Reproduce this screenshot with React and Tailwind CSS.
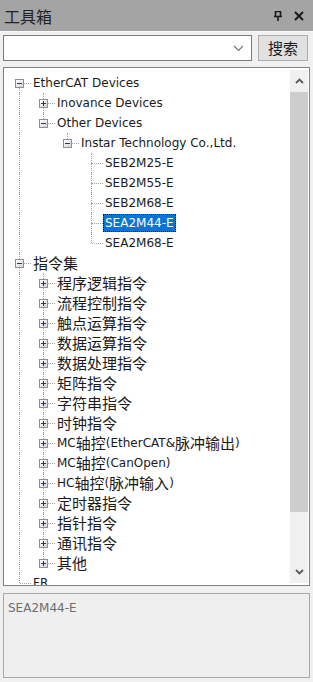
import React from "react";

// toolbox tree data
const tree = [
  {
    label: "EtherCAT Devices",
    open: true,
    children: [
      { label: "Inovance Devices", children: [{ label: "x" }] },
      {
        label: "Other Devices",
        open: true,
        children: [
          {
            label: "Instar Technology Co.,Ltd.",
            open: true,
            children: [
              { label: "SEB2M25-E" },
              { label: "SEB2M55-E" },
              { label: "SEB2M68-E" },
              { label: "SEA2M44-E", selected: true },
              { label: "SEA2M68-E" },
            ],
          },
        ],
      },
    ],
  },
  {
    label: "指令集",
    open: true,
    children: [
      "程序逻辑指令",
      "流程控制指令",
      "触点运算指令",
      "数据运算指令",
      "数据处理指令",
      "矩阵指令",
      "字符串指令",
      "时钟指令",
      "MC轴控(EtherCAT&脉冲输出)",
      "MC轴控(CanOpen)",
      "HC轴控(脉冲输入)",
      "定时器指令",
      "指针指令",
      "通讯指令",
      "其他",
    ].map((label) => ({ label, children: [{ label: "x" }] })),
  },
  { label: "FR" },
];

// flatten visible nodes into rows
const flatten = (nodes, guides = [], out = [], isRoot = true) => {
  nodes.forEach((node, i) => {
    const hasNext = i < nodes.length - 1;
    out.push({
      ...node,
      guides,
      hasNext,
      first: isRoot && i === 0,
      hasKids: !!node.children,
    });
    if (node.children && node.open) {
      flatten(node.children, [...guides, hasNext], out, false);
    }
  });
  return out;
};

const rows = flatten(tree);

// wrap CJK runs in a bigger size
const Label = ({ text }) =>
  text.split(/([\u4e00-\u9fff]+)/).map((part, i) =>
    /[\u4e00-\u9fff]/.test(part) ? (
      <span key={i} className="text-[15px] font-['Noto_Sans_CJK_SC',sans-serif]">
        {part}
      </span>
    ) : (
      <span key={i}>{part}</span>
    )
  );

const Expander = ({ open }) => (
  <div className="absolute left-[8px] top-[6px] w-[9px] h-[9px] border border-[#8f8f8f] bg-gradient-to-br from-white to-[#d4d4d4] flex items-center justify-center">
    <div className="relative w-[5px] h-[5px]">
      <div className="absolute left-0 top-[2px] w-[5px] h-px bg-[#1c3a6e]" />
      {!open && <div className="absolute left-[2px] top-0 w-px h-[5px] bg-[#1c3a6e]" />}
    </div>
  </div>
);

const Row = ({ row }) => (
  <div className="flex h-5 items-center shrink-0">
    {row.guides.map((g, i) => (
      <div key={i} className="relative w-6 h-5 shrink-0">
        {g && <div className="absolute left-[12px] top-0 bottom-0 border-l border-dotted border-[#a0a0a0]" />}
      </div>
    ))}
    <div className="relative w-6 h-5 shrink-0">
      {!row.first && <div className="absolute left-[12px] top-0 h-[10px] border-l border-dotted border-[#a0a0a0]" />}
      {row.hasNext && <div className="absolute left-[12px] top-[10px] bottom-0 border-l border-dotted border-[#a0a0a0]" />}
      <div className="absolute left-[13px] right-0 top-[10px] border-t border-dotted border-[#a0a0a0]" />
      {row.hasKids && <Expander open={row.open} />}
    </div>
    <div
      className={
        row.selected
          ? "h-[18px] px-[1px] flex items-center whitespace-nowrap bg-[#0a73d6] text-white border border-dotted border-[#1a1a1a]"
          : "h-[18px] px-[2px] flex items-center whitespace-nowrap text-[#1a1a1a]"
      }
    >
      <Label text={row.label} />
    </div>
  </div>
);

const Chevron = ({ up }) => (
  <svg width="9" height="6" viewBox="0 0 9 6">
    <path
      d={up ? "M1 5 L4.5 1.5 L8 5" : "M1 1 L4.5 4.5 L8 1"}
      fill="none"
      stroke="#5a5a5a"
      strokeWidth="1.8"
    />
  </svg>
);

export default function App() {
  return (
    <div className="w-[313px] h-[682px] bg-[#f0f0f0] flex flex-col overflow-hidden font-['DejaVu_Sans','Noto_Sans_CJK_SC',sans-serif] text-[12px]">
      {/* Title bar */}
      <div className="h-[31px] bg-[#a4a4a4] flex items-center pl-[4px] pr-[9px] shrink-0">
        <span className="text-[16px] text-[#222] flex-1 font-['Noto_Sans_CJK_SC',sans-serif]">工具箱</span>
        <svg width="8" height="10" viewBox="0 0 8 10" className="mr-[12px]">
          <path d="M1.5 0.5 H6.5 V5.5 H1.5 Z M0 5.5 H8 M4 5.5 V10" fill="none" stroke="#1a1a1a" strokeWidth="1.6" />
        </svg>
        <svg width="10" height="10" viewBox="0 0 10 10">
          <path d="M1 1 L9 9 M9 1 L1 9" stroke="#1a1a1a" strokeWidth="2" />
        </svg>
      </div>
      <div className="h-px bg-[#f8f8f8] shrink-0" />

      {/* Search row */}
      <div className="flex items-center px-[3px] pt-[3px] gap-[6px] shrink-0">
        <div className="w-[249px] h-[26px] bg-white border border-[#7a7a7a] flex items-center justify-end pr-[7px]">
          <svg width="11" height="7" viewBox="0 0 11 7">
            <path d="M1 1 L5.5 5.5 L10 1" fill="none" stroke="#777" strokeWidth="1.2" />
          </svg>
        </div>
        <div className="w-[50px] h-[26px] bg-[#e1e1e1] border border-[#adadad] flex items-center justify-center text-[15px] text-[#1a1a1a] font-['Noto_Sans_CJK_SC',sans-serif]">
          搜索
        </div>
      </div>

      {/* Tree */}
      <div className="mx-[3px] mt-[6px] h-[519px] bg-white border border-[#828282] flex shrink-0">
        <div className="flex-1 overflow-hidden pt-[5px] pl-[3px] flex flex-col">
          {rows.map((row, i) => (
            <Row key={i} row={row} />
          ))}
        </div>
        <div className="w-[18px] mr-[1px] my-[2px] bg-[#f0f0f0] flex flex-col">
          <div className="h-[22px] flex items-center justify-center">
            <Chevron up />
          </div>
          <div className="h-[420px] bg-[#cdcdcd]" />
          <div className="flex-1" />
          <div className="h-[22px] flex items-center justify-center">
            <Chevron />
          </div>
        </div>
      </div>

      {/* Description */}
      <div className="mx-[3px] mt-[7px] h-[85px] border border-[#a9a9a9] bg-[#efefef] px-[4px] pt-[5px] text-[12px] text-[#6d6d6d] shrink-0">
        SEA2M44-E
      </div>
    </div>
  );
}
